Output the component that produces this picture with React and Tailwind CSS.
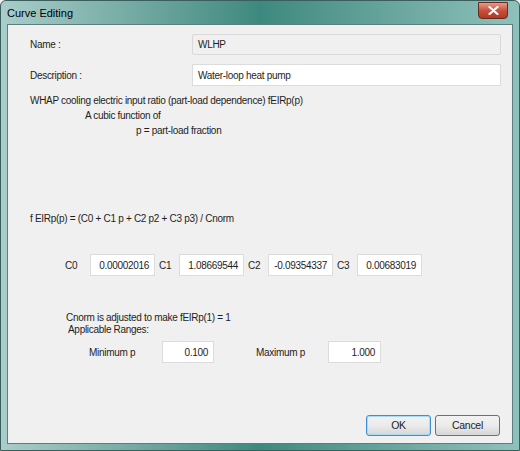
import React from 'react';

const font = { fontFamily: '"Liberation Sans", Arial, sans-serif' };

// Numeric text box, right-aligned like the native edit control
const NumBox = ({ value, className = '' }) => (
  <div className={`h-[22px] bg-white border border-[#dcdcdc] flex items-center justify-end pr-[5px] text-[10px] tracking-[-0.3px] text-[#1e1e1e] ${className}`}>
    {value}
  </div>
);

const CoefField = ({ label, value, labelClass }) => (
  <>
    <span className={labelClass}>{label}</span>
    <NumBox value={value} className="w-[65px]" />
  </>
);

const Button = ({ children, focused }) => (
  <button
    className={`w-[65px] h-[21px] rounded-[3px] text-[10.5px] text-[#1e1e1e] bg-gradient-to-b from-[#f2f2f2] via-[#ebebeb] to-[#d6d6d6] ${
      focused ? 'border border-[#3c8fd0] shadow-[inset_0_0_0_1px_#a8dbf5]' : 'border border-[#707070]'
    }`}
  >
    {children}
  </button>
);

export default function App() {
  return (
    <div className="w-[520px] h-[451px] bg-[#f0f0f0]" style={font}>
      <div className="w-full h-full flex flex-col rounded-t-[6px] border border-[#3a5e5b] bg-gradient-to-r from-[#a9cdca] via-[#3d897f] to-[#8fc1bc]">
        {/* title bar */}
        <div className="h-[23px] flex items-start justify-between pl-[6px] pr-[11px]">
          <span className="mt-[4px] text-[11px] text-black">Curve Editing</span>
          <div className="w-[30px] h-[17px] mt-[1px] rounded-b-[4px] border border-[#6b2a20] bg-gradient-to-b from-[#e49a8a] via-[#c8503c] to-[#b03a26] flex items-center justify-center">
            <svg width="11" height="9" viewBox="0 0 11 9">
              <path d="M1.5 1 L9.5 8 M9.5 1 L1.5 8" stroke="#fff" strokeWidth="2.2" strokeLinecap="round" />
            </svg>
          </div>
        </div>

        {/* client area */}
        <div className="flex-1 mx-[6px] mb-[6px] border border-[#5d7f7c] bg-[#f0f0f0] flex flex-col text-[10px] tracking-[-0.3px] text-[#1e1e1e]">
          <div className="flex items-center mt-[9px] h-[21px]">
            <span className="ml-[22px] w-[162px]">Name :</span>
            <div className="w-[309px] h-[21px] border border-[#d9d9d9] rounded-[2px] bg-[#f0f0f0] flex items-center pl-[5px]">WLHP</div>
          </div>
          <div className="flex items-center mt-[9px] h-[22px]">
            <span className="ml-[22px] w-[162px]">Description :</span>
            <div className="w-[309px] h-[22px] border border-[#dcdcdc] bg-white flex items-center pl-[5px]">Water-loop heat pump</div>
          </div>

          <div className="ml-[22px] mt-[7px] leading-[15px]">
            <div>WHAP cooling electric input ratio (part-load dependence) fEIRp(p)</div>
            <div className="ml-[55px]">A cubic function of</div>
            <div className="ml-[106px]">p = part-load fraction</div>
          </div>

          <div className="ml-[22px] mt-[73px]">f EIRp(p) = (C0 + C1 p + C2 p2 + C3 p3) / Cnorm</div>

          <div className="flex items-center mt-[28px] ml-[57px]">
            <CoefField label="C0" value="0.00002016" labelClass="w-[25px]" />
            <CoefField label="C1" value="1.08669544" labelClass="w-[24px] pl-[4px]" />
            <CoefField label="C2" value="-0.09354337" labelClass="w-[24px] pl-[4px]" />
            <CoefField label="C3" value="0.00683019" labelClass="w-[24px] pl-[4px]" />
          </div>

          <div className="ml-[58px] mt-[36px] leading-[12px]">
            <div>Cnorm is adjusted to make fEIRp(1) = 1</div>
            <div className="ml-[2px]">Applicable Ranges:</div>
          </div>

          <div className="flex items-center mt-[5px] ml-[81px]">
            <span className="w-[73px]">Minimum p</span>
            <NumBox value="0.100" className="w-[52px] h-[20px]" />
            <span className="ml-[42px] w-[72px]">Maximum p</span>
            <NumBox value="1.000" className="w-[53px] h-[20px]" />
          </div>

          <div className="flex-1" />
          <div className="flex justify-end gap-[4px] pr-[12px] pb-[7px]">
            <Button focused>OK</Button>
            <Button>Cancel</Button>
          </div>
        </div>
      </div>
    </div>
  );
}
